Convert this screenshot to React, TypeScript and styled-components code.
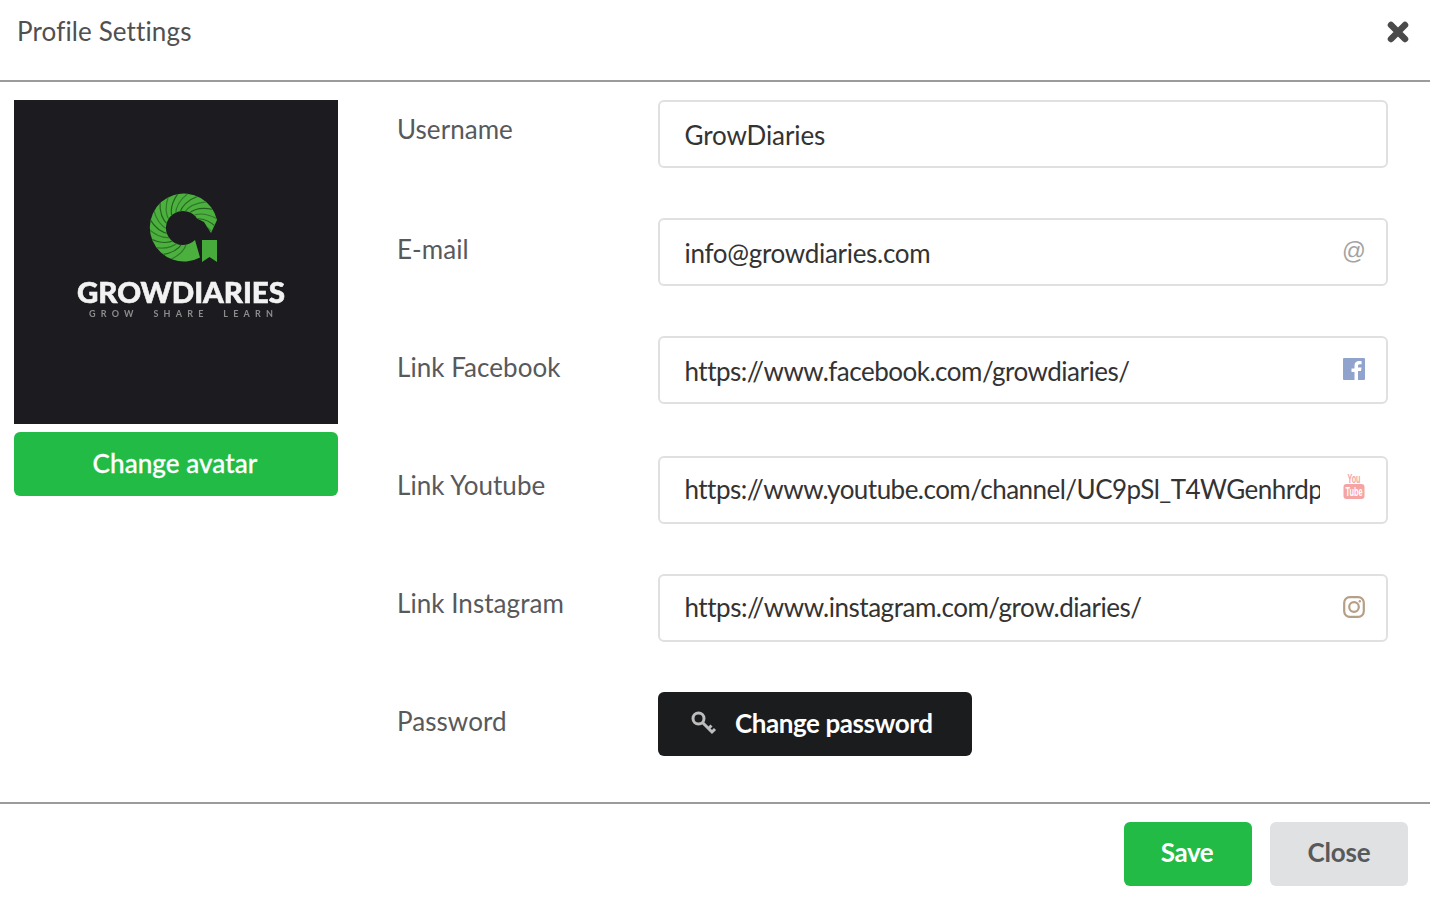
import React from "react";
import styled, { createGlobalStyle } from "styled-components";

const Global = createGlobalStyle`
  html, body { margin: 0; padding: 0; background: #fff; }
  body { font-family: Lato, "Liberation Sans", sans-serif; color: #4a4a4a; }
  * { box-sizing: border-box; }
`;

const Page = styled.div`
  width: 1430px;
  height: 898px;
  display: flex;
  flex-direction: column;
  overflow: hidden;
`;

const Header = styled.header`
  height: 82px;
  flex: none;
  border-bottom: 2px solid #9b9b9b;
  display: flex;
  align-items: flex-start;
  justify-content: space-between;
  padding: 15px 20px 0 17px;
`;

const Title = styled.h1`
  margin: 0;
  font-size: 26px;
  line-height: 32px;
  font-weight: 400;
  letter-spacing: 0.13px;
  color: #505050;
`;

const CloseX = styled.svg`
  width: 24px;
  height: 24px;
  margin-top: 5px;
`;

const Body = styled.main`
  flex: none;
  height: 722px;
  display: flex;
  padding: 18px 42px 0 14px;
  border-bottom: 2px solid #9b9b9b;
`;

const AvatarColumn = styled.div`
  width: 324px;
  flex: none;
  display: flex;
  flex-direction: column;
  gap: 8px;
`;

const Avatar = styled.svg`
  width: 324px;
  height: 324px;
  display: block;
`;

const GreenButton = styled.button`
  border: 0;
  border-radius: 6px;
  background: #22bb46;
  color: #fff;
  font-family: inherit;
  font-size: 26px;
  padding: 0 0 2px;
`;

const AvatarButton = styled(GreenButton)`
  height: 64px;
  width: 324px;
  font-weight: 500;
  letter-spacing: 0.08px;
  padding-right: 2px;
  -webkit-text-stroke: 0.3px #fff;
`;

const Fields = styled.div`
  flex: 1;
  margin-left: 59px;
  display: flex;
  flex-direction: column;
  min-width: 0;
`;

const Row = styled.div<{ $shift?: number }>`
  display: flex;
  height: 68px;
  margin-bottom: 50px;
  margin-top: ${(p) => p.$shift ?? 0}px;
`;

const Label = styled.label<{ $drop?: number }>`
  width: 261px;
  flex: none;
  font-size: 26px;
  line-height: 32px;
  padding-top: ${(p) => 13 + (p.$drop ?? 0)}px;
  letter-spacing: 0.05px;
  color: #58595b;
  font-weight: 400;
`;

const InputBox = styled.div`
  flex: 1;
  height: 68px;
  border: 2px solid #e0e0e0;
  border-radius: 6px;
  display: flex;
  align-items: center;
  padding: 0 20px 0 24.500px;
  min-width: 0;
`;

const Value = styled.input<{ $tracking: number; $lift?: boolean }>`
  flex: 1;
  min-width: 0;
  border: 0;
  outline: 0;
  padding: 0;
  background: transparent;
  font-family: inherit;
  font-size: 26px;
  line-height: 34px;
  letter-spacing: ${(p) => p.$tracking}px;
  color: #333;
  margin-top: ${(p) => (p.$lift ? -2 : 2)}px;
`;

const FieldIcon = styled.svg<{ $tall?: boolean }>`
  flex: none;
  width: 24px;
  height: ${(p) => (p.$tall ? 26 : 24)}px;
  margin-left: 22px;
  margin-top: ${(p) => (p.$tall ? -8 : -2)}px;
  overflow: visible;
`;

const PasswordButton = styled.button`
  width: 314px;
  height: 64px;
  border: 0;
  border-radius: 6px;
  background: #1b1c1e;
  color: #fff;
  font-family: inherit;
  font-size: 26px;
  font-weight: 700;
  letter-spacing: -0.43px;
  display: flex;
  align-items: center;
  padding: 0 0 2px 32px;
  gap: 18px;
`;

const KeyIcon = styled.svg`
  width: 27px;
  height: 27px;
  flex: none;
`;

const Footer = styled.footer`
  flex: none;
  display: flex;
  justify-content: flex-end;
  gap: 18px;
  padding: 18px 22px 0 0;
`;

const SaveButton = styled(GreenButton)`
  width: 128px;
  height: 64px;
  font-weight: 700;
  letter-spacing: -0.45px;
  padding: 0 2px 4px 0;
`;

const CloseButton = styled.button`
  width: 138px;
  height: 64px;
  border: 0;
  border-radius: 6px;
  background: #e0e1e3;
  color: #58595b;
  font-family: inherit;
  font-size: 26px;
  font-weight: 700;
  letter-spacing: -0.2px;
  padding: 0 0 4px;
`;

const cx = 169;
const cy = 128;
const strands = Array.from({ length: 18 }, (_, i) => {
  const a0 = ((-4 - i * 16.500) * Math.PI) / 180;
  const a1 = a0 + (38 * Math.PI) / 180;
  return {
    d: `M${cx + 15 * Math.cos(a0)} ${cy + 15 * Math.sin(a0)} Q${cx + 26 * Math.cos(a0 + 0.22)} ${cy + 26 * Math.sin(a0 + 0.22)} ${cx + 35 * Math.cos(a1)} ${cy + 35 * Math.sin(a1)}`,
    tone: i % 2 === 0 ? "#24641f" : "#2f7a29",
  };
});

const Logo = () => (
  <Avatar viewBox="0 0 324 324">
    <defs>
      <filter id="soft" x="-5%" y="-5%" width="110%" height="110%">
        <feGaussianBlur stdDeviation="0.7" />
      </filter>
      <clipPath id="ring">
        <path d="M186 157.400 A34 34 0 1 1 203 120 L197 133 L190 122 L183 118.400 A17 17 0 1 0 181 140 Z" />
      </clipPath>
    </defs>
    <rect width="324" height="324" fill="#1c1c20" />
    <g filter="url(#soft)">
      <g clipPath="url(#ring)">
        <circle cx={cx} cy={cy} r="36" fill="#4cb03e" />
        {strands.map((s, i) => (
          <path key={i} d={s.d} fill="none" stroke={s.tone} strokeWidth="1.200" />
        ))}
      </g>
      <path d="M188 140 L203 140 L203 162 L195.500 157 L188 162 Z" fill="#46ab3a" />
      <text
        x="167"
        y="203"
        textAnchor="middle"
        fontFamily="Lato, sans-serif"
        fontWeight="900"
        fontSize="29"
        fill="#f2f2f2"
        stroke="#f2f2f2"
        strokeWidth="0.600"
        textLength="208"
        lengthAdjust="spacingAndGlyphs"
      >
        GROWDIARIES
      </text>
      <text
        x="167"
        y="217"
        textAnchor="middle"
        fontFamily="Lato, sans-serif"
        fontWeight="700"
        fontSize="9"
        fill="#8c8c8c"
        textLength="184"
        xmlSpace="preserve"
      >
        GROW  SHARE  LEARN
      </text>
    </g>
  </Avatar>
);

const At = () => (
  <FieldIcon viewBox="0 0 24 24">
    <text x="12" y="20" textAnchor="middle" fontFamily="'Liberation Sans', sans-serif" fontSize="23.500" fill="#a3a3a3">
      @
    </text>
  </FieldIcon>
);

const Facebook = () => (
  <FieldIcon viewBox="0 0 24 24">
    <path
      fillRule="evenodd"
      d="M2 1h20a1 1 0 0 1 1 1v20a1 1 0 0 1-1 1h-6v-9h3l.5-3.500H16V9c0-1 .4-1.700 1.800-1.700h1.800V4.200C19.200 4.100 18.200 4 17 4c-2.600 0-4.500 1.600-4.500 4.500v3h-3V15h3v8H2a1 1 0 0 1-1-1V2a1 1 0 0 1 1-1z"
      fill="#8fa3cc"
    />
  </FieldIcon>
);

const Youtube = () => (
  <FieldIcon $tall viewBox="0 0 24 26">
    <text x="12" y="10" textAnchor="middle" fontFamily="'Liberation Sans', sans-serif" fontSize="12" fontWeight="700" fill="#f5a3a3" textLength="13" lengthAdjust="spacingAndGlyphs">
      You
    </text>
    <rect x="1.500" y="11" width="21" height="15" rx="3" fill="#f5a3a3" />
    <text x="12" y="23" textAnchor="middle" fontFamily="'Liberation Sans', sans-serif" fontSize="12" fontWeight="700" fill="#fff" textLength="17" lengthAdjust="spacingAndGlyphs">
      Tube
    </text>
  </FieldIcon>
);

const Instagram = () => (
  <FieldIcon viewBox="0 0 24 24" fill="none" stroke="#b59f86" strokeWidth="2.200">
    <rect x="2.200" y="2.200" width="19.600" height="19.600" rx="5.500" />
    <circle cx="12" cy="12" r="4.800" />
    <circle cx="17.800" cy="6.200" r="1.200" fill="#b59f86" stroke="none" />
  </FieldIcon>
);

const fields: {
  label: string;
  value: string;
  tracking: number;
  icon?: React.ReactNode;
  shift?: number;
  drop?: number;
  lift?: boolean;
}[] = [
  { label: "Username", value: "GrowDiaries", tracking: -0.1 },
  { label: "E-mail", value: "info@growdiaries.com", tracking: -0.3, icon: <At />, drop: 2 },
  { label: "Link Facebook", value: "https://www.facebook.com/growdiaries/", tracking: -0.5, icon: <Facebook />, drop: 2 },
  { label: "Link Youtube", value: "https://www.youtube.com/channel/UC9pSl_T4WGenhrdpPEPHEXQ", tracking: -0.52, icon: <Youtube />, shift: 2, lift: true },
  { label: "Link Instagram", value: "https://www.instagram.com/grow.diaries/", tracking: -0.47, icon: <Instagram />, lift: true },
];

export default function App() {
  return (
    <Page>
      <Global />
      <Header>
        <Title>Profile Settings</Title>
        <CloseX viewBox="0 0 24 24">
          <path d="M5 5 L19 19 M19 5 L5 19" stroke="#4a4a4a" strokeWidth="6.500" strokeLinecap="round" />
        </CloseX>
      </Header>
      <Body>
        <AvatarColumn>
          <Logo />
          <AvatarButton>Change avatar</AvatarButton>
        </AvatarColumn>
        <Fields>
          {fields.map((f) => (
            <Row key={f.label} $shift={f.shift}>
              <Label $drop={f.drop}>{f.label}</Label>
              <InputBox>
                <Value defaultValue={f.value} readOnly $tracking={f.tracking} $lift={f.lift} />
                {f.icon}
              </InputBox>
            </Row>
          ))}
          <Row>
            <Label>Password</Label>
            <PasswordButton>
              <KeyIcon viewBox="0 0 27 27" fill="none" stroke="#bdbdbd" strokeWidth="3">
                <circle cx="8.500" cy="8.500" r="5.500" />
                <path d="M12.500 12.500 L23 23 M18.500 18.500 L21.500 15.500 M22 22 L25 19" />
              </KeyIcon>
              Change password
            </PasswordButton>
          </Row>
        </Fields>
      </Body>
      <Footer>
        <SaveButton>Save</SaveButton>
        <CloseButton>Close</CloseButton>
      </Footer>
    </Page>
  );
}
